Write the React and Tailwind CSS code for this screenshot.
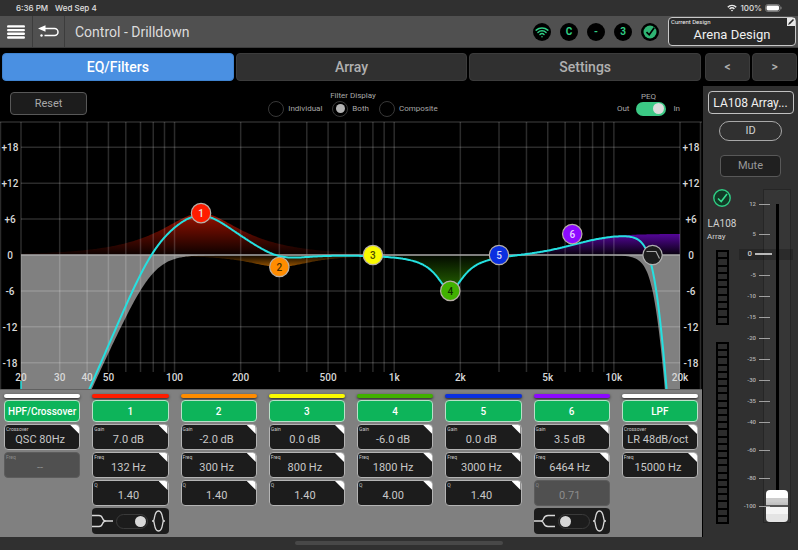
import { useState } from "react";
import { Wifi } from "lucide-react";

const CHART_W = 702;
const CHART_H = 268;
const LEFT = 21;
const RIGHT = 680;
const ZERO = 134;
const PX_PER_DB = 5.98;
const SAMPLE_RATE = 48000;

const bands = [
  { id: "1", color: "#ff1c00", textColor: "#e8e8e8", freq: 132, gain: 7, q: 1.4 },
  { id: "2", color: "#ff8c00", textColor: "#4d3000", freq: 300, gain: -2, q: 1.4 },
  { id: "3", color: "#fafa00", textColor: "#4d4d00", freq: 800, gain: 0, q: 1.4 },
  { id: "4", color: "#41b000", textColor: "#103000", freq: 1800, gain: -6, q: 4 },
  { id: "5", color: "#0a2fe0", textColor: "#d0d8ff", freq: 3000, gain: 0, q: 1.4 },
  { id: "6", color: "#8c0aff", textColor: "#e8d0ff", freq: 6464, gain: 3.5, q: 0.71, shelf: true },
];

const columns = [
  {
    title: "HPF/Crossover",
    bar: "bg-white",
    fields: [
      { label: "Crossover", value: "QSC 80Hz" },
      { label: "Freq", value: "--", disabled: true },
    ],
  },
  {
    title: "1",
    bar: "bg-[#ff1c00]",
    shape: "bell",
    fields: [
      { label: "Gain", value: "7.0 dB" },
      { label: "Freq", value: "132 Hz" },
      { label: "Q", value: "1.40" },
    ],
  },
  {
    title: "2",
    bar: "bg-[#ff8c00]",
    fields: [
      { label: "Gain", value: "-2.0 dB" },
      { label: "Freq", value: "300 Hz" },
      { label: "Q", value: "1.40" },
    ],
  },
  {
    title: "3",
    bar: "bg-[#fafa00]",
    fields: [
      { label: "Gain", value: "0.0 dB" },
      { label: "Freq", value: "800 Hz" },
      { label: "Q", value: "1.40" },
    ],
  },
  {
    title: "4",
    bar: "bg-[#41b000]",
    fields: [
      { label: "Gain", value: "-6.0 dB" },
      { label: "Freq", value: "1800 Hz" },
      { label: "Q", value: "4.00" },
    ],
  },
  {
    title: "5",
    bar: "bg-[#0a2fe0]",
    fields: [
      { label: "Gain", value: "0.0 dB" },
      { label: "Freq", value: "3000 Hz" },
      { label: "Q", value: "1.40" },
    ],
  },
  {
    title: "6",
    bar: "bg-[#8c0aff]",
    shape: "shelf",
    fields: [
      { label: "Gain", value: "3.5 dB" },
      { label: "Freq", value: "6464 Hz" },
      { label: "Q", value: "0.71", disabled: true },
    ],
  },
  {
    title: "LPF",
    bar: "bg-white",
    fields: [
      { label: "Crossover", value: "LR 48dB/oct" },
      { label: "Freq", value: "15000 Hz" },
    ],
  },
];

const faderMarks = [
  { label: "12", gap: "mt-[15px]" },
  { label: "5", gap: "mt-[30px]" },
  { label: "0", gap: "mt-5" },
  { label: "-5", gap: "mt-[21px]" },
  { label: "-10", gap: "mt-[21px]" },
  { label: "-15", gap: "mt-[21px]" },
  { label: "-20", gap: "mt-[21px]" },
  { label: "-25", gap: "mt-[21px]" },
  { label: "-30", gap: "mt-[21px]" },
  { label: "-35", gap: "mt-[21px]" },
  { label: "-40", gap: "mt-[21px]" },
  { label: "-60", gap: "mt-7" },
  { label: "-80", gap: "mt-7" },
  { label: "-100", gap: "mt-7" },
];

const freqLabels = [
  [20, "20"],
  [30, "30"],
  [40, "40"],
  [50, "50"],
  [100, "100"],
  [200, "200"],
  [500, "500"],
  [1000, "1k"],
  [2000, "2k"],
  [5000, "5k"],
  [10000, "10k"],
  [20000, "20k"],
];

const dbLabels = [18, 12, 6, 0, -6, -12, -18];

const gridFreqs = [10, 100, 1000, 10000]
  .flatMap((d) => [1, 2, 3, 4, 5, 6, 7, 8, 9].map((n) => n * d))
  .filter((f) => f >= 20 && f <= 20000);

const xOf = (f) => LEFT + (Math.log10(f / 20) * (RIGHT - LEFT)) / 3;
const fOf = (x) => 20 * Math.pow(10, ((x - LEFT) * 3) / (RIGHT - LEFT));
const yOf = (db) => ZERO - db * PX_PER_DB;

// bilinear frequency warping, relative to the filter's own frequency
const warp = (f) => Math.tan((Math.PI * f) / SAMPLE_RATE);
const ratio = (f, f0) => warp(f) / warp(f0);

const bandDb = ({ freq, gain, q, shelf }, f) => {
  const r = ratio(f, freq);
  if (shelf) {
    const a = Math.pow(10, gain / 40);
    const mid = (a / (q * q)) * r * r;
    const num = Math.pow(1 - a * r * r, 2) + mid;
    const den = Math.pow(a - r * r, 2) + mid;
    return 10 * Math.log10((a * a * num) / den);
  }
  const g = Math.pow(10, Math.abs(gain) / 20);
  const u = Math.pow(r - 1 / r, 2);
  const db = 10 * Math.log10((u + (g * g) / (q * q)) / (u + 1 / (q * q)));
  return gain < 0 ? -db : db;
};

// 4th order Butterworth high pass, 8th order Linkwitz-Riley low pass
const hpfDb = (f) => -10 * Math.log10(1 + Math.pow(ratio(80, f), 8));
const lpfDb = (f) => -20 * Math.log10(1 + Math.pow(ratio(f, 15000), 8));
const totalDb = (f) =>
  hpfDb(f) + lpfDb(f) + bands.reduce((sum, b) => sum + bandDb(b, f), 0);

const curve = (fn) => {
  const points = [];
  for (let x = LEFT; x <= RIGHT; x += 1) {
    const y = Math.min(yOf(fn(fOf(x))), CHART_H + 20);
    points.push(`${x} ${y.toFixed(1)}`);
  }
  return `M${points.join("L")}`;
};

const area = (fn) => `${curve(fn)}L${RIGHT} ${ZERO}L${LEFT} ${ZERO}Z`;

const EqChart = () => {
  return (
    <svg
      viewBox={`0 0 ${CHART_W} ${CHART_H}`}
      className="block w-full bg-black"
      role="img"
      aria-label="EQ response"
    >
      <defs>
        {bands.map((b) => (
          <linearGradient
            key={b.id}
            id={`fill-${b.id}`}
            gradientUnits="userSpaceOnUse"
            x1="0"
            x2="0"
            y1={yOf(b.gain || 1)}
            y2={ZERO}
          >
            <stop offset="0" stopColor={b.color} stopOpacity="0.6" />
            <stop offset="1" stopColor={b.color} stopOpacity="0.05" />
          </linearGradient>
        ))}
      </defs>
      <path d={area(hpfDb)} fill="#808080" />
      <path d={area(lpfDb)} fill="#808080" />
      {bands
        .filter((b) => b.gain !== 0)
        .map((b) => (
          <path key={b.id} d={area((f) => bandDb(b, f))} fill={`url(#fill-${b.id})`} />
        ))}
      <g stroke="#ffffff" strokeOpacity="0.17" strokeWidth="1.5">
        {gridFreqs.map((f) => (
          <line key={f} x1={xOf(f)} x2={xOf(f)} y1="1" y2="251" />
        ))}
        {dbLabels
          .filter((db) => db !== 0)
          .map((db) => (
            <line key={db} x1={LEFT} x2={RIGHT} y1={yOf(db)} y2={yOf(db)} />
          ))}
        <line x1="0" x2={CHART_W} y1="1" y2="1" />
        <line x1="0.5" x2="0.5" y1="1" y2={CHART_H} />
        <line x1="700.5" x2="700.5" y1="1" y2={CHART_H} />
      </g>
      <line x1={LEFT} x2={RIGHT} y1={ZERO} y2={ZERO} stroke="#a8a8a8" strokeWidth="1.5" />
      <path d={curve(totalDb)} fill="none" stroke="#25e0e0" strokeWidth="2" />
      <path d="M21 260V268" stroke="#25e0e0" strokeWidth="1.5" />
      <g fill="#d8d8d8" fontSize="10" fontWeight="500" textAnchor="middle">
        {freqLabels.map(([f, text]) => (
          <text key={text} x={xOf(f)} y="260">
            {text}
          </text>
        ))}
        {dbLabels.map((db) => (
          <g key={db}>
            <text x="10" y={yOf(db) + 4}>
              {db > 0 ? `+${db}` : db}
            </text>
            <text x="691" y={yOf(db) + 4}>
              {db > 0 ? `+${db}` : db}
            </text>
          </g>
        ))}
      </g>
      {bands.map((b) => (
        <g key={b.id}>
          <circle
            cx={xOf(b.freq)}
            cy={yOf(b.gain)}
            r="9.7"
            fill={b.color}
            stroke="#b8b0a8"
            strokeWidth="1.2"
          />
          <text
            x={xOf(b.freq)}
            y={yOf(b.gain) + 4}
            fill={b.textColor}
            fontSize="10"
            fontWeight="500"
            textAnchor="middle"
          >
            {b.id}
          </text>
        </g>
      ))}
      <circle cx={xOf(15000)} cy={ZERO} r="9.7" fill="#1c1c1c" stroke="#b0b0b0" strokeWidth="1.2" />
      <path d="M646.5 130.5H656L659.5 137.5" fill="none" stroke="#a8a8a8" strokeWidth="1.2" />
    </svg>
  );
};

const Field = ({ label, value, disabled }) => {
  return (
    <label
      className={
        disabled
          ? "relative block h-[26px] overflow-hidden rounded border border-[#5c5c5c] bg-[#505050] text-[#8c8c8c]"
          : "relative block h-[26px] overflow-hidden rounded border border-[#b4b4b4] bg-[#1c1c1c] text-[#c8c8c8]"
      }
    >
      <span className="absolute left-px top-0 text-[5px] leading-[8px]">{label}</span>
      <input
        type="text"
        defaultValue={value}
        disabled={disabled}
        className="block h-full w-full bg-transparent pr-1 pt-1 text-center text-[11px] leading-4 outline-none"
      />
      {!disabled && (
        <span className="absolute right-0 top-0 size-[9px] bg-white [clip-path:polygon(0_0,100%_0,100%_100%)]" />
      )}
    </label>
  );
};

const ShapeSwitch = ({ shape, title }) => {
  const [bell, setBell] = useState(shape === "bell");
  return (
    <label className="flex h-[26px] items-center justify-between rounded bg-[#1c1c1c] pr-1">
      <svg viewBox="0 0 21 14" className="h-3.5 w-[21px]" fill="none" stroke="#d8d8d8" strokeWidth="1.3">
        {shape === "bell" ? (
          <path d="M0 1.5H7C12 1.5 9 7 14 7H21M0 12.5H7C12 12.5 9 7 14 7" />
        ) : (
          <path d="M0 7H7C11 7 8 1.5 14 1.5H21M7 7C11 7 8 12.5 14 12.5H21" />
        )}
      </svg>
      <input
        type="checkbox"
        role="switch"
        aria-label={`Band ${title} bell shape`}
        checked={bell}
        onChange={(e) => setBell(e.target.checked)}
        className="flex h-[15px] w-8 appearance-none items-center rounded-full border border-[#3a3a3a] px-px before:size-[11px] before:rounded-full before:bg-[#d8d8d8] checked:justify-end"
      />
      <svg viewBox="0 0 13 22" className="h-[22px] w-[13px]" fill="none" stroke="#d8d8d8" strokeWidth="1.3">
        <path d="M0 11H1.5C3 9 2 1 6.5 1S10 9 11.5 11H13" />
        <path d="M1.5 11C3 13 2 21 6.5 21S10 13 11.5 11" />
      </svg>
    </label>
  );
};

const Badge = ({ children }) => {
  return (
    <span className="flex size-[18px] items-center justify-center rounded-full bg-black text-[10px] font-bold text-[#2fce85]">
      {children}
    </span>
  );
};

const StatusBar = () => {
  return (
    <div className="flex h-4 items-center justify-between bg-[#303030] pl-4 pr-4 font-['Inter',sans-serif] text-[8px] font-medium text-[#e0e0e0]">
      <div className="flex gap-[7px]">
        <span>6:36 PM</span>
        <span>Wed Sep 4</span>
      </div>
      <div className="flex items-center gap-[3px]">
        <svg viewBox="0 0 10 8" className="h-2 w-2.5" fill="none" stroke="#ececec" strokeWidth="1.4">
          <path d="M0.8 3.2C3 0.7 7 0.7 9.2 3.2M2.6 5C4 3.6 6 3.6 7.4 5" />
          <path d="M5 7.5L3.9 6.2Q5 5.3 6.1 6.2Z" fill="#ececec" stroke="none" />
        </svg>
        <span>100%</span>
        <svg viewBox="0 0 17 8" className="h-2 w-[17px]">
          <rect x="0.5" y="0.5" width="14.5" height="7" rx="2.3" fill="none" stroke="#8a8a8a" strokeWidth="0.8" />
          <rect x="1.5" y="1.5" width="12.5" height="5" rx="1.4" fill="#fff" />
          <path d="M16 2.8V5.2" stroke="#8a8a8a" />
        </svg>
      </div>
    </div>
  );
};

const Header = () => {
  return (
    <header className="flex h-8 items-stretch border-b border-[#3c3c3c] bg-[#505050]">
      <button aria-label="Menu" className="flex w-8 items-center justify-center text-white">
        <svg viewBox="0 0 18 14" className="h-3.5 w-[18px]" stroke="currentColor" strokeWidth="2.4" strokeLinecap="round">
          <path d="M1.2 1.4H16.8M1.2 5.1H16.8M1.2 8.8H16.8M1.2 12.5H16.8" />
        </svg>
      </button>
      <button
        aria-label="Back"
        className="flex w-[33px] items-center justify-center border-x border-[#3c3c3c] text-white"
      >
        <svg viewBox="0 0 21 13" className="h-[13px] w-[21px]" fill="none" stroke="currentColor" strokeWidth="1.5">
          <path d="M6 3.5H16.5A3.5 3.5 0 0 1 16.5 10.5H6.5" />
          <path d="M0 3.5L7.5 0.2V6.8Z" fill="currentColor" stroke="none" />
          <circle cx="3.5" cy="10.5" r="1.2" fill="currentColor" stroke="none" />
        </svg>
      </button>
      <h1 className="ml-2.5 flex-1 self-center text-sm text-[#dcdcdc]">Control - Drilldown</h1>
      <div className="flex items-center gap-[9px] pr-[9px]">
        <Badge>
          <Wifi size={14} strokeWidth={2.5} />
        </Badge>
        <Badge>C</Badge>
        <Badge>-</Badge>
        <Badge>3</Badge>
        <Badge>
          <svg viewBox="0 0 18 18" className="size-[18px]">
            <circle cx="9" cy="9" r="6.5" fill="#2fb473" />
            <path d="M5.5 9.2L8.2 11.8L13.2 4.8" fill="none" stroke="#000" strokeWidth="1.7" />
          </svg>
        </Badge>
      </div>
      <button className="relative my-px mr-0.5 w-32 rounded-sm border border-[#c8c8c8] bg-[#2a2a2a] text-[#f0f0f0]">
        <span className="absolute left-0.5 top-0 text-[6px] leading-[8px]">Current Design</span>
        <span className="block pt-1.5 text-[13px] leading-4">Arena Design</span>
        <svg viewBox="0 0 8 8" className="absolute right-0 top-0 size-2">
          <path d="M0 0H8V8H0Z" fill="#e8e8e8" />
          <path d="M1 7L2 4.8L6 1L7 2L3.2 6Z" fill="#2a2a2a" />
        </svg>
      </button>
    </header>
  );
};

const Tabs = () => {
  const [active, setActive] = useState("EQ/Filters");
  return (
    <nav className="flex gap-1 pl-0.5 pr-px pt-[5px] text-sm font-medium">
      <div className="grid flex-1 grid-cols-3 gap-0.5">
        {["EQ/Filters", "Array", "Settings"].map((tab) => (
          <button
            key={tab}
            onClick={() => setActive(tab)}
            className={
              tab === active
                ? "h-7 rounded border border-[#3f83d0] bg-[#4a90e2] text-white"
                : "h-7 rounded border border-[#3c3c3c] bg-[#303030] text-[#b0b0b0]"
            }
          >
            {tab}
          </button>
        ))}
      </div>
      <div className="flex gap-0.5 text-xs">
        <button aria-label="Previous" className="h-7 w-[45px] rounded border border-[#3c3c3c] bg-[#303030] text-[#b0b0b0]">
          &lt;
        </button>
        <button aria-label="Next" className="h-7 w-[45px] rounded border border-[#3c3c3c] bg-[#303030] text-[#b0b0b0]">
          &gt;
        </button>
      </div>
    </nav>
  );
};

const Toolbar = () => {
  const [display, setDisplay] = useState("Both");
  return (
    <div className="grid h-[35px] grid-cols-[1fr_auto_1fr] items-center text-[8px] leading-[10px] text-[#a8a8a8]">
      <button className="ml-2.5 h-[23px] w-[77px] rounded border border-[#585858] bg-[#1c1c1c] text-[11px]">
        Reset
      </button>
      <fieldset className="pl-1">
        <legend className="mx-auto">Filter Display</legend>
        <div className="flex gap-2.5">
          {["Individual", "Both", "Composite"].map((name) => (
            <label key={name} className="flex items-center gap-1">
              <input
                type="radio"
                name="display"
                checked={display === name}
                onChange={() => setDisplay(name)}
                className="flex size-4 appearance-none items-center justify-center rounded-full border border-[#383838] checked:before:size-[9px] checked:before:rounded-full checked:before:bg-[#b4b4b4]"
              />
              {name}
            </label>
          ))}
        </div>
      </fieldset>
      <div className="flex flex-col items-center justify-self-end pr-[22px]">
        <span id="peq">PEQ</span>
        <div className="flex items-center gap-[7px]">
          <span>Out</span>
          <input
            type="checkbox"
            role="switch"
            aria-labelledby="peq"
            defaultChecked
            className="flex h-3.5 w-[30px] appearance-none items-center rounded-full bg-[#505050] px-0.5 before:size-[11px] before:rounded-full before:bg-[#dcdcdc] checked:justify-end checked:bg-[#3cc985]"
          />
          <span>In</span>
        </div>
      </div>
    </div>
  );
};

const Meter = ({ count, height }) => {
  return (
    <div className={`flex w-[13px] flex-col gap-0.5 bg-black p-0.5 ${height}`}>
      {Array.from({ length: count }, (_, i) => (
        <span key={i} className="flex-1 bg-[#2c2c2c]" />
      ))}
    </div>
  );
};

const Sidebar = () => {
  return (
    <aside className="w-[95px] shrink-0 bg-[#303030] pt-[5px] text-[#d0d0d0]">
      <div className="flex flex-col items-center">
        <button className="h-[23px] w-[86px] rounded-sm border border-[#c0c0c0] text-xs text-[#f0f0f0]">
          LA108 Array...
        </button>
        <button className="mt-[7px] h-5 w-[63px] rounded-full border border-[#a8a8a8] text-[11px] leading-4">
          ID
        </button>
        <button className="mt-3.5 h-[22px] w-[61px] rounded-sm border border-[#585858] bg-[#202020] text-[11px] leading-5 text-[#989898]">
          Mute
        </button>
      </div>
      <div className="mt-3 flex pl-1 pr-[7px]">
        <div className="flex w-[30px] flex-col items-center">
          <svg viewBox="0 0 18 18" className="size-[18px]" fill="none">
            <circle cx="9" cy="9" r="8.2" fill="#123a26" stroke="#2fce85" strokeWidth="1.4" />
            <path d="M5 9.5L8.2 12.5L14 5" stroke="#36e090" strokeWidth="1.6" />
          </svg>
          <span className="mt-2.5 text-[10px] leading-[14px]">LA108</span>
          <span className="mb-[7px] self-start text-[8px] leading-3">Array</span>
          <Meter count={10} height="h-[75px]" />
          <div className="h-[17px]" />
          <Meter count={25} height="h-[182px]" />
        </div>
        <div className="relative flex flex-1 justify-end">
          <div className="relative z-10 -mr-[9px] flex flex-col">
            {faderMarks.map(({ label, gap }) => (
              <div key={label} className={`flex h-0 items-center justify-end gap-[3px] ${gap}`}>
                <span
                  className={
                    label === "0"
                      ? "text-[8px] font-medium leading-none text-[#c8c8c8]"
                      : "text-[6px] font-medium leading-none text-[#b4b4b4]"
                  }
                >
                  {label}
                </span>
                <span
                  className={
                    label === "0" ? "h-0.5 w-[17px] bg-[#b8b8b8]" : "mr-0.5 h-px w-[11px] bg-[#a0a0a0]"
                  }
                />
              </div>
            ))}
          </div>
          <div className="h-[334px] w-7 border border-[#262626] bg-[#363636] pt-3.5">
            <input
              type="range"
              aria-label="Gain"
              min="0"
              max="100"
              defaultValue="0"
              className="block h-[318px] w-[26px] appearance-none bg-[linear-gradient(#000,#000)] bg-[length:3px_100%] bg-center bg-no-repeat [direction:rtl] [writing-mode:vertical-lr] [&::-webkit-slider-thumb]:h-8 [&::-webkit-slider-thumb]:w-[22px] [&::-webkit-slider-thumb]:appearance-none [&::-webkit-slider-thumb]:rounded-sm [&::-webkit-slider-thumb]:bg-[linear-gradient(#fff_0_25%,#ccc_25%_35%,#bbb_48%,#555_48%_52%,#f4f4f4_52%_75%,#e4e4e4_75%)]"
            />
          </div>
          <div className="absolute -right-0.5 left-0 top-[60px] ml-0.5 h-[11px] bg-black/20" />
        </div>
      </div>
    </aside>
  );
};

const App = () => {
  return (
    <div className="flex min-h-screen flex-col bg-black font-['Roboto',sans-serif]">
      <StatusBar />
      <Header />
      <Tabs />
      <div className="flex items-stretch pt-[5px]">
        <main className="flex min-w-0 flex-1 flex-col">
          <Toolbar />
          <EqChart />
          <section className="grid flex-1 grid-cols-8 gap-x-3 border-t border-[#606060] bg-[#808080] px-1 pb-[3px] pt-1">
            {columns.map(({ title, bar, fields, shape }) => (
              <div key={title} className="flex flex-col gap-0.5">
                <div className={`h-1 rounded-full shadow-sm shadow-black/60 ${bar}`} />
                <button className="h-[22px] whitespace-nowrap rounded border border-[#b8e0c8] bg-[#0db45a] text-[10px] font-medium text-white">
                  {title}
                </button>
                {fields.map((field) => (
                  <Field key={field.label} {...field} />
                ))}
                {shape && <ShapeSwitch shape={shape} title={title} />}
              </div>
            ))}
          </section>
        </main>
        <div className="w-px bg-black" />
        <Sidebar />
      </div>
      <footer className="flex flex-1 justify-center bg-[#303030] py-1">
        <div className="h-1 w-[26%] rounded-full bg-[#484848]" />
      </footer>
    </div>
  );
};

export default App;
